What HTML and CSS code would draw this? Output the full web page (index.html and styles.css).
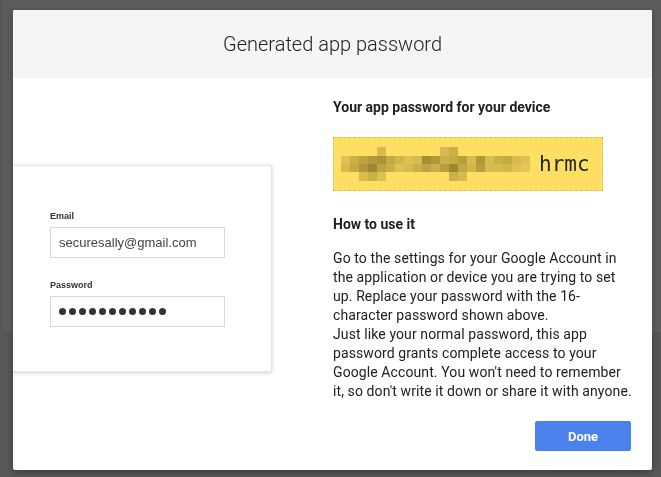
FILE: index.html
```html
<html>

<head>
    <title>Generated app password</title>
    <link rel="stylesheet" href="styles.css">
</head>

<body>

    <div class="page-behind"></div>

    <div class="overlay">
        <div class="dialog">
            <div class="dialog-header">
                <h2>Generated app password</h2>
            </div>

            <div class="dialog-body">
                <div class="illustration">
                    <div class="signin-card">
                        <label>Email</label>
                        <div class="fake-input">securesally@gmail.com</div>

                        <label>Password</label>
                        <div class="fake-input dots">
                            <span></span><span></span><span></span><span></span><span></span><span></span>
                            <span></span><span></span><span></span><span></span><span></span>
                        </div>
                    </div>
                </div>

                <div class="details">
                    <h3>Your app password for your device</h3>

                    <div class="app-password">
                        <svg class="mosaic" width="190" height="34" viewBox="0 0 190 34">
                            <g fill="#7d6a1e">
                                <rect x="36" y="0" width="9" height="9" opacity=".3" />
                                <rect x="99" y="0" width="9" height="9" opacity=".3" />
                                <rect x="108" y="0" width="9" height="9" opacity=".4" />

                                <rect x="0" y="9" width="9" height="8" opacity=".25" />
                                <rect x="9" y="9" width="9" height="8" opacity=".4" />
                                <rect x="18" y="9" width="9" height="8" opacity=".5" />
                                <rect x="27" y="9" width="9" height="8" opacity=".6" />
                                <rect x="36" y="9" width="9" height="8" opacity=".65" />
                                <rect x="45" y="9" width="9" height="8" opacity=".45" />
                                <rect x="54" y="9" width="9" height="8" opacity=".35" />
                                <rect x="63" y="9" width="9" height="8" opacity=".25" />
                                <rect x="72" y="9" width="9" height="8" opacity=".3" />
                                <rect x="81" y="9" width="9" height="8" opacity=".7" />
                                <rect x="90" y="9" width="9" height="8" opacity=".6" />
                                <rect x="99" y="9" width="9" height="8" opacity=".4" />
                                <rect x="108" y="9" width="9" height="8" opacity=".45" />
                                <rect x="117" y="9" width="9" height="8" opacity=".55" />
                                <rect x="126" y="9" width="9" height="8" opacity=".3" />
                                <rect x="135" y="9" width="9" height="8" opacity=".6" />
                                <rect x="144" y="9" width="9" height="8" opacity=".3" />
                                <rect x="153" y="9" width="9" height="8" opacity=".4" />
                                <rect x="162" y="9" width="9" height="8" opacity=".45" />
                                <rect x="171" y="9" width="9" height="8" opacity=".3" />
                                <rect x="180" y="9" width="9" height="8" opacity=".25" />

                                <rect x="0" y="17" width="9" height="8" opacity=".3" />
                                <rect x="9" y="17" width="9" height="8" opacity=".45" />
                                <rect x="18" y="17" width="9" height="8" opacity=".6" />
                                <rect x="27" y="17" width="9" height="8" opacity=".75" />
                                <rect x="36" y="17" width="9" height="8" opacity=".5" />
                                <rect x="45" y="17" width="9" height="8" opacity=".4" />
                                <rect x="54" y="17" width="9" height="8" opacity=".25" />
                                <rect x="63" y="17" width="9" height="8" opacity=".3" />
                                <rect x="72" y="17" width="9" height="8" opacity=".4" />
                                <rect x="81" y="17" width="9" height="8" opacity=".5" />
                                <rect x="90" y="17" width="9" height="8" opacity=".4" />
                                <rect x="99" y="17" width="9" height="8" opacity=".55" />
                                <rect x="108" y="17" width="9" height="8" opacity=".75" />
                                <rect x="117" y="17" width="9" height="8" opacity=".45" />
                                <rect x="126" y="17" width="9" height="8" opacity=".35" />
                                <rect x="135" y="17" width="9" height="8" opacity=".55" />
                                <rect x="144" y="17" width="9" height="8" opacity=".3" />
                                <rect x="153" y="17" width="9" height="8" opacity=".3" />
                                <rect x="162" y="17" width="9" height="8" opacity=".35" />
                                <rect x="171" y="17" width="9" height="8" opacity=".25" />
                                <rect x="180" y="17" width="9" height="8" opacity=".2" />

                                <rect x="18" y="25" width="9" height="9" opacity=".3" />
                                <rect x="27" y="25" width="9" height="9" opacity=".4" />
                                <rect x="36" y="25" width="9" height="9" opacity=".25" />
                                <rect x="108" y="25" width="9" height="9" opacity=".4" />
                                <rect x="117" y="25" width="9" height="9" opacity=".3" />
                            </g>
                        </svg>
                        <span class="visible-part">hrmc</span>
                    </div>

                    <h3 class="how-to">How to use it</h3>

                    <p>
                        Go to the settings for your Google Account in the application or device you are trying to set
                        up. Replace your password with the 16-character password shown above.<br>
                        Just like your normal password, this app password grants complete access to your Google
                        Account. You won't need to remember it, so don't write it down or share it with anyone.
                    </p>

                    <div class="actions">
                        <button>Done</button>
                    </div>
                </div>
            </div>
        </div>
    </div>

</body>

</html>
```

FILE: styles.css
```css
body {
    margin: 0;
    background-color: #575757;
    font-family: Roboto, "Liberation Sans", Arial, sans-serif;
    color: #212121;
}

.page-behind {
    margin-left: 3px;
    height: 330px;
    background-color: #5c5c5c;
    border-bottom: 1px solid #616161;
    border-bottom-left-radius: 3px;
}

.overlay {
    position: fixed;
    top: 0;
    left: 0;
    right: 0;
    bottom: 0;
    padding: 10px 0 0 13px;
}

.dialog {
    width: 639px;
    height: 460px;
    background-color: #fff;
    border-radius: 2px;
    overflow: hidden;
    box-shadow: 0 2px 6px rgba(0, 0, 0, 0.3);
}

.dialog-header {
    height: 68px;
    background-color: #f5f5f5;
    display: flex;
    align-items: center;
    justify-content: center;
}

.dialog-header h2 {
    margin: 0;
    font-size: 20px;
    font-weight: 300;
    color: #212121;
}

.dialog-body {
    display: flex;
}

.illustration {
    flex: none;
    width: 320px;
    padding-top: 87px;
}

.signin-card {
    margin-left: -20px;
    width: 175px;
    padding: 44px 46px 44px 56px;
    background-color: #fff;
    border: 1px solid #e6e6e6;
    box-shadow: 0 1px 4px rgba(0, 0, 0, 0.18);
    font-family: "Liberation Sans", Arial, sans-serif;
}

.signin-card label {
    display: block;
    font-size: 9px;
    line-height: 12px;
    font-weight: bold;
    color: #333;
    margin-bottom: 5px;
}

.fake-input {
    width: 165px;
    height: 29px;
    padding-left: 8px;
    border: 1px solid #d9d9d9;
    font-size: 13px;
    line-height: 29px;
    color: #444;
    margin-bottom: 21px;
}

.fake-input:last-child {
    margin-bottom: 0;
}

.dots {
    display: flex;
    align-items: center;
    gap: 2.8px;
}

.dots span {
    width: 7.2px;
    height: 7.2px;
    border-radius: 50%;
    background-color: #333;
}

.details {
    flex: none;
    width: 300px;
    padding: 19px 0 0;
}

.details h3 {
    margin: 0;
    font-size: 14px;
    line-height: 20px;
    font-weight: bold;
}

.app-password {
    margin-top: 20px;
    height: 52px;
    width: 261px;
    padding-left: 7px;
    display: flex;
    align-items: center;
    gap: 8px;
    background-color: #fedf63;
    border: 1px dashed #e3c256;
}

.visible-part {
    font-family: "DejaVu Sans Mono", "Liberation Mono", monospace;
    font-size: 21px;
    color: #1f261c;
}

.details .how-to {
    margin-top: 23px;
}

.details p {
    margin: 15px 0 0;
    font-size: 14px;
    line-height: 19px;
    letter-spacing: 0.1px;
}

.actions {
    display: flex;
    justify-content: flex-end;
    margin-top: 20px;
    padding-right: 2px;
}

button {
    width: 96px;
    height: 30px;
    background-color: #4a81eb;
    color: white;
    border: none;
    border-radius: 2px;
    font-family: Roboto, sans-serif;
    font-size: 13px;
    font-weight: bold;
    cursor: pointer;
}

button:hover {
    background-color: #3b72dc;
}
```
